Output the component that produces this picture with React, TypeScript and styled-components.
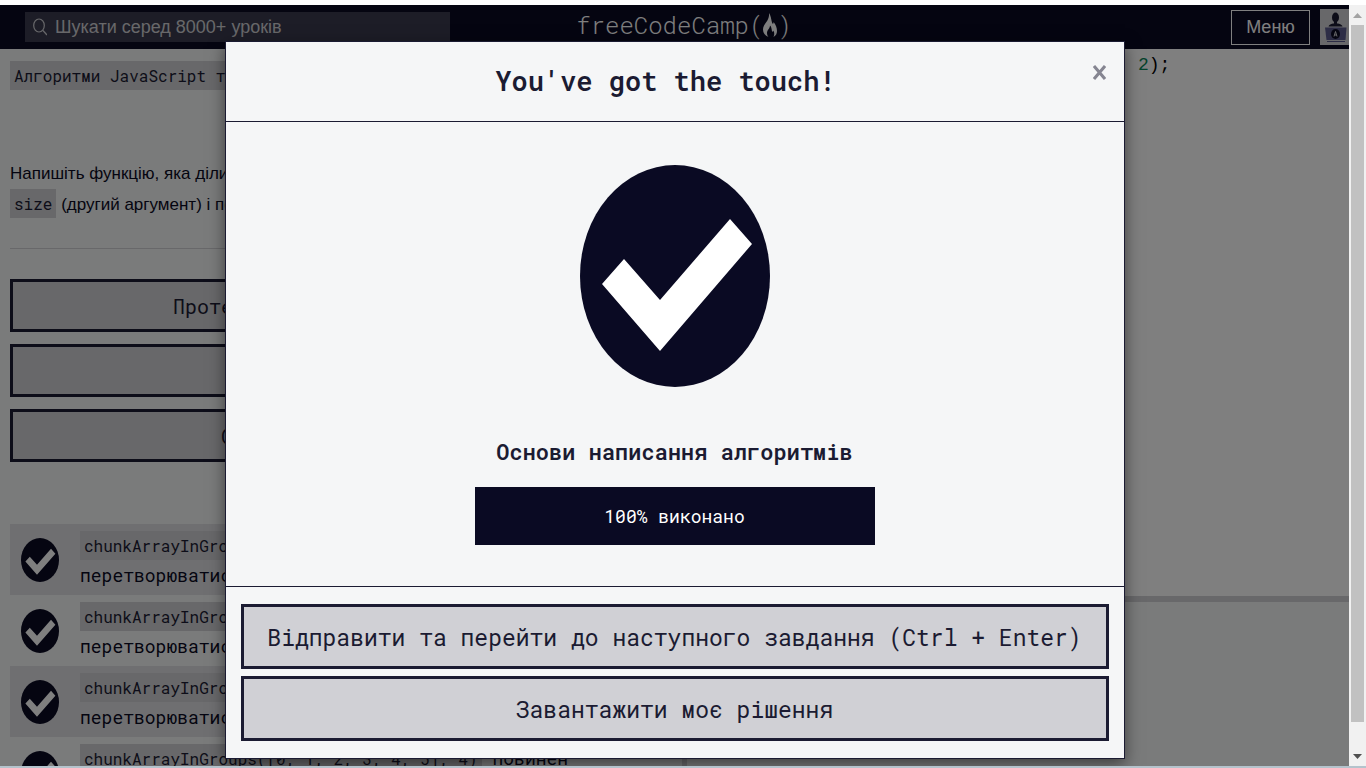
import React from "react";
import styled, { createGlobalStyle } from "styled-components";

const mono = `"Roboto Mono", "Liberation Mono", monospace`;
const sans = `"Liberation Sans", Arial, sans-serif`;

const GlobalStyle = createGlobalStyle`
  * { box-sizing: border-box; }
  body { margin: 0; background: #ffffff; overflow: hidden; }
  button, input { font: inherit; }
`;

const Screen = styled.div`
  height: 100vh;
  display: flex;
  flex-direction: column;
  padding: 5px 0 2px;
  background: linear-gradient(#ffffff 50%, #b4c3cc 50%);
  font-family: ${sans};
  color: #0a0a23;
`;

const Viewport = styled.div`
  flex: 1;
  min-height: 0;
  display: flex;
`;

const Page = styled.div`
  position: relative;
  flex: 1;
  min-width: 0;
  display: flex;
  flex-direction: column;
  overflow: hidden;
  background: #f5f6f7;
`;

const TopBar = styled.header`
  display: grid;
  grid-template-columns: 1fr auto 1fr;
  align-items: center;
  height: 44px;
  flex: none;
  padding-left: 25px;
  background: #0a0a23;
  overflow: hidden;
`;

const Search = styled.label`
  display: flex;
  align-items: center;
  gap: 8px;
  width: 425px;
  height: 30px;
  padding: 0 8px;
  background: #3b3b4f;
  color: #d0d0d5;
`;

const SearchInput = styled.input`
  flex: 1;
  min-width: 0;
  padding: 0;
  border: 0;
  outline: 0;
  background: transparent;
  color: inherit;
  font-size: 18px;
  &::placeholder { color: #d0d0d5; opacity: 1; }
`;

const Logo = styled.a`
  display: flex;
  align-items: center;
  padding: 0 6px 4px 0;
  color: #ffffff;
  font: 300 24px/32px ${mono};
  text-decoration: none;
`;

const TopActions = styled.div`
  display: flex;
  justify-content: flex-end;
  align-items: center;
  gap: 10px;
`;

const MenuButton = styled.button`
  width: 79px;
  height: 35px;
  padding: 0;
  border: 1px solid #ffffff;
  background: transparent;
  color: #ffffff;
  font-size: 18px;
`;

const Avatar = styled.svg`
  display: block;
  background: #d0d0d5;
`;

const Panes = styled.main`
  flex: 1;
  min-height: 0;
  display: flex;
`;

const Lesson = styled.section`
  flex: 1;
  min-width: 0;
  overflow: hidden;
  padding: 12px 10px 0;
`;

const Code = styled.code`
  display: inline-block;
  padding: 0 4px;
  background: #d0d0d5;
  color: #1b1b32;
  font: 400 16px/29px ${mono};
  white-space: nowrap;
`;

const Instructions = styled.p`
  margin: 68px 0 28px;
  font-size: 17px;
  line-height: 31px;
  white-space: nowrap;
`;

const Rule = styled.hr`
  margin: 0 0 30px;
  border: 0;
  border-top: 1px solid #d0d0d5;
`;

const Stack = styled.div<{ $gap: number }>`
  display: flex;
  flex-direction: column;
  gap: ${(p) => p.$gap}px;
`;

const ActionButton = styled.button<{ $large?: boolean }>`
  height: ${(p) => (p.$large ? 65 : 53)}px;
  padding: 0 12px;
  border: 3px solid #1b1b32;
  background: #d0d0d5;
  color: #1b1b32;
  font: 400 ${(p) => (p.$large ? 23 : 20)}px/32px ${mono};
  white-space: nowrap;
`;

const Caret = styled.span`
  margin-left: 24px;
`;

const Tests = styled.ul`
  margin: 62px 0 0;
  padding: 0;
  list-style: none;
`;

const Test = styled.li`
  display: flex;
  align-items: center;
  gap: 21px;
  height: 71px;
  padding-left: 11px;
  font: 400 18px/30px ${mono};
  white-space: nowrap;
  &:nth-child(odd) { background: #dfdfe2; }
`;

const Splitter = styled.div`
  width: 5px;
  background: #d0d0d5;
`;

const Workspace = styled.section`
  flex: 1;
  min-width: 0;
  display: flex;
  flex-direction: column;
`;

const Editor = styled.pre`
  flex: 545;
  margin: 0;
  padding: 4px 8px;
  background: #ffffff;
  color: #000000;
  font: 400 18px/24px "Liberation Mono", monospace;
`;

const Literal = styled.span<{ $kind: "text" | "number" }>`
  color: ${(p) => (p.$kind === "number" ? "#098658" : "#a31515")};
`;

const Output = styled.div`
  flex: 166;
  border-top: 6px solid #d0d0d5;
`;

const Backdrop = styled.div`
  position: absolute;
  inset: 0;
  display: flex;
  justify-content: center;
  align-items: flex-start;
  padding-top: 36px;
  background: rgba(0, 0, 0, 0.5);
`;

const Dialog = styled.div`
  width: 900px;
  max-width: 100%;
  border: 1px solid #1b1b32;
  background: #f5f6f7;
  color: #1b1b32;
  font-family: ${mono};
  box-shadow: 0 5px 15px rgba(0, 0, 0, 0.5);
`;

const DialogHeader = styled.header`
  position: relative;
  padding: 19px 34px 20px 16px;
  border-bottom: 1px solid #1b1b32;
  text-align: center;
`;

const DialogTitle = styled.h2`
  margin: 0;
  font-size: 27px;
  font-weight: 600;
  line-height: 40px;
`;

const CloseButton = styled.button`
  position: absolute;
  top: 16px;
  right: 12px;
  width: 24px;
  height: 30px;
  padding: 0;
  border: 0;
  background: transparent;
  color: #858591;
`;

const DialogBody = styled.div`
  display: flex;
  flex-direction: column;
  align-items: center;
  padding: 43px 16px 41px;
`;

const BlockTitle = styled.h3`
  margin: 49px 0 19px;
  font-size: 22px;
  font-weight: 600;
  line-height: 32px;
`;

const ProgressBar = styled.div`
  width: 400px;
  background: #0a0a23;
  color: #ffffff;
  font-size: 18px;
  line-height: 58px;
  text-align: center;
`;

const DialogFooter = styled.footer`
  padding: 17px 15px;
  border-top: 1px solid #1b1b32;
`;

const ScrollTrack = styled.div`
  display: flex;
  flex-direction: column;
  align-items: center;
  gap: 7px;
  width: 17px;
  padding: 8px 0 7px;
  background: #f1f1f1;
`;

const ScrollThumb = styled.div`
  flex: 697;
  width: 13px;
  background: #c1c1c1;
`;

const ScrollRest = styled.div`
  flex: 18;
`;

const CheckMark = ({ width, height }: { width: number; height: number }) => (
  <svg width={width} height={height} viewBox="0 0 190 222" preserveAspectRatio="none" aria-hidden="true">
    <ellipse cx="95" cy="111" rx="95" ry="111" fill="#0a0a23" />
    <path d="M22 119 L44 94 L80 135 L150 54 L172 79 L80 186 Z" fill="#ffffff" />
  </svg>
);

const Flame = () => (
  <svg width="14" height="24" viewBox="0 0 14 24" fill="currentColor" aria-hidden="true">
    <path d="M6 0C8 3 8 6 9 9.500C9.600 11.500 10.600 11 10.600 9C13 12 14 15 14 18C14 20.500 13 22.500 10.500 24C11.500 21.500 11.500 20 10.500 17.500C10 19.500 8.900 19 8.700 16.500C8.500 15 8 13.500 7 12.500C7 15.500 4 17 4 20C4 21.500 4.500 23 5.500 24C2 22.500 0 20 0 16.500C0 10.500 7 8 6 0Z" />
  </svg>
);

const tests = [
  `chunkArrayInGroups(["a", "b", "c", "d"], 2)`,
  `chunkArrayInGroups([0, 1, 2, 3, 4, 5], 3)`,
  `chunkArrayInGroups([0, 1, 2, 3, 4, 5], 2)`,
  `chunkArrayInGroups([0, 1, 2, 3, 4, 5], 4)`,
];

export default function App() {
  return (
    <Screen>
      <GlobalStyle />
      <Viewport>
        <Page>
          <TopBar>
            <Search>
              <svg width="14" height="18" viewBox="0 0 14 18" fill="none" stroke="currentColor" strokeWidth="1.2" aria-hidden="true">
                <ellipse cx="6" cy="7.500" rx="5.300" ry="6.500" />
                <path d="M10 12.500 L14 17" />
              </svg>
              <SearchInput aria-label="Пошук" placeholder="Шукати серед 8000+ уроків" />
            </Search>
            <Logo href="#home">
              freeCodeCamp(<Flame />)
            </Logo>
            <TopActions>
              <MenuButton>Меню</MenuButton>
              <Avatar width="29" height="36" viewBox="0 0 29 36" role="img" aria-label="Профіль">
                <ellipse cx="15.500" cy="8.500" rx="3.500" ry="5" fill="#1b1b32" />
                <path d="M14 12 H17 V15 H14 Z" fill="#1b1b32" />
                <path d="M8.500 17.500 Q9 15.500 13 14.500 H18 Q22 15.500 22.500 17.500 Z" fill="#1b1b32" />
                <path d="M5 18.500 H26.500 L25.500 31 H6.500 Z" fill="#5a5a8c" />
                <path d="M7 32.500 H25" stroke="#5a5a8c" />
                <ellipse cx="15.500" cy="25" rx="4.500" ry="5" fill="#0a0a23" />
                <path d="M14 27.500 L15.500 22.500 L17 27.500 M14.500 26 H16.500" stroke="#d0d0d5" fill="none" />
              </Avatar>
            </TopActions>
          </TopBar>
          <Panes>
            <Lesson>
              <Code>Алгоритми JavaScript та структури даних</Code>
              <Instructions>
                Напишіть функцію, яка ділить масив (перший аргумент) на групи
                <br />
                <Code>size</Code> (другий аргумент) і повертає їх як двовимірний масив.
              </Instructions>
              <Rule />
              <Stack $gap={12}>
                <ActionButton>Протестуйте код (Ctrl+Enter)</ActionButton>
                <ActionButton>Скинути код</ActionButton>
                <ActionButton>
                  Отримати допомогу<Caret>▾</Caret>
                </ActionButton>
              </Stack>
              <Tests>
                {tests.map((call) => (
                  <Test key={call}>
                    <CheckMark width={38} height={44} />
                    <div>
                      <Code>{call}</Code> повинен
                      <br />
                      перетворюватись на масив
                    </div>
                  </Test>
                ))}
              </Tests>
            </Lesson>
            <Splitter />
            <Workspace>
              <Editor>
                chunkArrayInGroups([<Literal $kind="text">"a"</Literal>, <Literal $kind="text">"b"</Literal>,{" "}
                <Literal $kind="text">"c"</Literal>, <Literal $kind="text">"d"</Literal>],{" "}
                <Literal $kind="number">2</Literal>);
              </Editor>
              <Output />
            </Workspace>
          </Panes>
          <Backdrop>
            <Dialog role="dialog" aria-modal="true" aria-labelledby="dialog-title">
              <DialogHeader>
                <DialogTitle id="dialog-title">You've got the touch!</DialogTitle>
                <CloseButton aria-label="Закрити">
                  <svg width="13" height="15" viewBox="0 0 13 15" stroke="currentColor" strokeWidth="3" aria-hidden="true">
                    <path d="M1 1 L12 14 M12 1 L1 14" />
                  </svg>
                </CloseButton>
              </DialogHeader>
              <DialogBody>
                <CheckMark width={190} height={222} />
                <BlockTitle>Основи написання алгоритмів</BlockTitle>
                <ProgressBar>100% виконано</ProgressBar>
              </DialogBody>
              <DialogFooter>
                <Stack $gap={7}>
                  <ActionButton $large>Відправити та перейти до наступного завдання (Ctrl + Enter)</ActionButton>
                  <ActionButton $large>Завантажити моє рішення</ActionButton>
                </Stack>
              </DialogFooter>
            </Dialog>
          </Backdrop>
        </Page>
        <ScrollTrack aria-hidden="true">
          <svg width="9" height="5" viewBox="0 0 9 5"><path d="M0 5 L4.500 0 L9 5 Z" fill="#a3a3a3" /></svg>
          <ScrollThumb />
          <ScrollRest />
          <svg width="9" height="5" viewBox="0 0 9 5"><path d="M0 0 L4.500 5 L9 0 Z" fill="#505050" /></svg>
        </ScrollTrack>
      </Viewport>
    </Screen>
  );
}
